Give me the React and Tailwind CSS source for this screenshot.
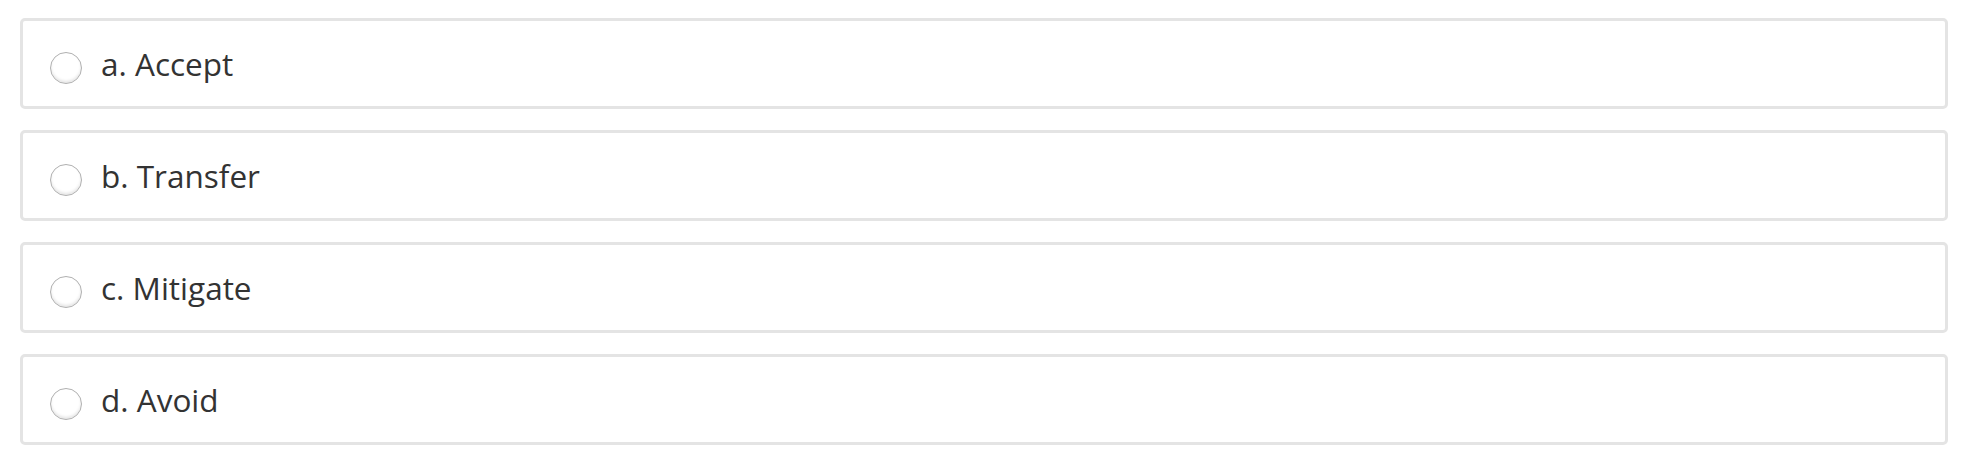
const OPTIONS = [
  { key: 'a', label: 'Accept' },
  { key: 'b', label: 'Transfer' },
  { key: 'c', label: 'Mitigate' },
  { key: 'd', label: 'Avoid' },
];

function RadioDot() {
  return (
    <span className="mt-[9px] block h-[32px] w-[32px] shrink-0 rounded-full border-[1.5px] border-[#b0b0b0] bg-white shadow-[inset_0_-2px_3px_rgba(0,0,0,0.1)]" />
  );
}

export default function App() {
  return (
    <div
      className="flex w-[1976px] flex-col gap-[21px] bg-white pt-[18px] pl-[20px] pr-[28px] pb-[18px]"
      style={{ fontFamily: '"Open Sans", "Liberation Sans", sans-serif' }}
    >
      {OPTIONS.map((opt) => (
        <label
          key={opt.key}
          className="flex h-[91px] items-center rounded-[5px] border-[3px] border-[#e4e4e4] bg-white pl-[27px]"
        >
          <RadioDot />
          <span className="ml-[19px] text-[31.5px] leading-[41px] text-[#333333]">
            {opt.key}. {opt.label}
          </span>
        </label>
      ))}
    </div>
  );
}
